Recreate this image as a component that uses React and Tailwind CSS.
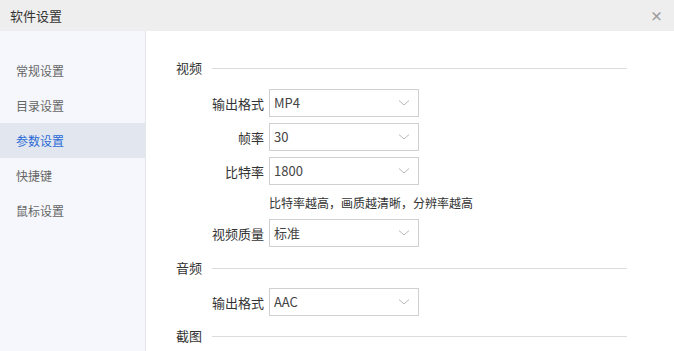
import React from "react";

const font = { fontFamily: '"Noto Sans CJK SC", "Noto Sans", sans-serif' };

function Chevron() {
  return (
    <svg width="12" height="7" viewBox="0 0 12 7" className="absolute right-[8px] top-1/2 -translate-y-1/2">
      <path d="M1 1 L6 5.5 L11 1" fill="none" stroke="#b8b8b8" strokeWidth="1" />
    </svg>
  );
}

function Row({ label, value, className = "" }) {
  return (
    <div className={"flex items-center " + className}>
      <div className="w-[93px] text-right text-[13px] text-[#333] pr-[5px] leading-none">{label}</div>
      <div className="relative w-[150px] h-[28px] border border-[#d0d0d0] bg-white flex items-center pl-[4px] text-[13px] text-[#444]">
        {value}
        <Chevron />
      </div>
    </div>
  );
}

function Section({ title, className = "" }) {
  return (
    <div className={"flex items-center h-[20px] " + className}>
      <div className="text-[13px] text-[#333] w-[36px]">{title}</div>
      <div className="flex-1 h-px bg-[#dcdcdc]" />
    </div>
  );
}

export default function App() {
  const items = ["常规设置", "目录设置", "参数设置", "快捷键", "鼠标设置"];
  return (
    <div className="w-[674px] h-[351px] bg-white flex flex-col overflow-hidden" style={font}>
      <div className="h-[31px] bg-[#eeeeee] flex items-center justify-between pl-[10px] pr-[11px] shrink-0">
        <span className="text-[13px] text-[#333]">软件设置</span>
        <span className="text-[13px] text-[#999] font-bold leading-none">×</span>
      </div>
      <div className="flex flex-1 min-h-0">
        <div className="w-[146px] bg-[#f5f7fc] border-r border-[#e4e6ea] pt-[22px] shrink-0">
          {items.map((t, i) => (
            <div
              key={t}
              className={
                "h-[35px] flex items-center pl-[16px] text-[12px] " +
                (i === 2 ? "bg-[#e1e6ef] text-[#2b6bd6]" : "text-[#666]")
              }
            >
              {t}
            </div>
          ))}
        </div>
        <div className="flex-1 pl-[30px] pr-[47px] pt-[27px] flex flex-col">
          <Section title="视频" />
          <Row label="输出格式" value="MP4" className="mt-[11px]" />
          <Row label="帧率" value="30" className="mt-[6px]" />
          <Row label="比特率" value="1800" className="mt-[6px]" />
          <div className="mt-[8px] h-[20px] pl-[93px] flex items-center text-[12px] text-[#333]">
            比特率越高，画质越清晰，分辨率越高
          </div>
          <Row label="视频质量" value="标准" className="mt-[6px]" />
          <Section title="音频" className="mt-[11px]" />
          <Row label="输出格式" value="AAC" className="mt-[10px]" />
          <Section title="截图" className="mt-[10px]" />
        </div>
      </div>
    </div>
  );
}
